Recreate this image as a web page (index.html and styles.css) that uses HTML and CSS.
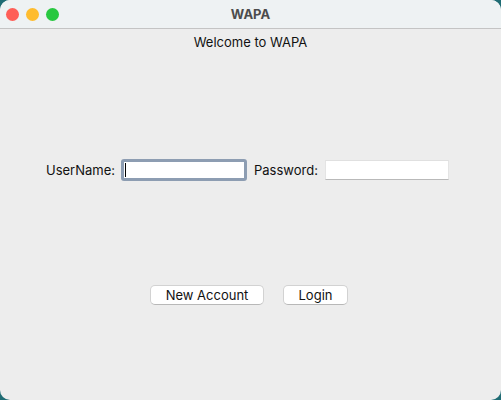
FILE: index.html
```html
<!DOCTYPE html>
<html>
<head>
<meta charset="utf-8">
<link rel="stylesheet" href="styles.css">
</head>
<body>
<div class="window">
  <div class="titlebar">
    <div class="lights">
      <span class="light red"></span>
      <span class="light yellow"></span>
      <span class="light green"></span>
    </div>
    <div class="title">WAPA</div>
  </div>
  <div class="content">
    <div class="welcome">Welcome to WAPA</div>
    <div class="form-row">
      <span class="label user">UserName:</span>
      <div class="field focused"><span class="caret"></span></div>
      <span class="label pw">Password:</span>
      <div class="field plain"></div>
    </div>
    <div class="button-row">
      <button class="btn new">New Account</button>
      <button class="btn login">Login</button>
    </div>
  </div>
</div>
</body>
</html>
```
FILE: styles.css
```css
html, body {
  margin: 0;
  padding: 0;
  background: #1f6c74;
}
body {
  width: 501px;
  height: 400px;
  overflow: hidden;
  font-family: Inter, "Liberation Sans", Arial, sans-serif;
  font-size: 13px;
  color: #111;
}
.window {
  width: 501px;
  height: 400px;
  background: #ededed;
  border-radius: 10px;
  overflow: hidden;
  display: flex;
  flex-direction: column;
}
.titlebar {
  height: 28px;
  background: #eef2f3;
  border-bottom: 1px solid #c4c4c4;
  display: flex;
  align-items: center;
  position: relative;
}
.lights {
  display: flex;
  gap: 7px;
  padding-left: 6px;
}
.light {
  width: 13px;
  height: 13px;
  border-radius: 50%;
  display: block;
}
.red { background: #fe5f57; }
.yellow { background: #febc2e; }
.green { background: #28c840; }
.title {
  position: absolute;
  left: 0;
  right: 0;
  top: 0;
  line-height: 28px;
  text-align: center;
  font-weight: bold;
  color: #4c4c4c;
  font-size: 13px;
}
.content {
  display: flex;
  flex-direction: column;
}
.welcome {
  margin-top: 5px;
  line-height: 16px;
  text-align: center;
}
.form-row {
  margin-top: 109px;
  height: 22px;
  display: flex;
  align-items: center;
  padding-left: 46px;
}
.label {
  line-height: 16px;
}
.user { width: 75px; }
.pw {
  margin-left: 7px;
  width: 71px;
}
.field {
  box-sizing: border-box;
  background: #fff;
  position: relative;
}
.focused {
  width: 126px;
  height: 22px;
  border: 3px solid #8d9db2;
  border-radius: 3px;
}
.caret {
  position: absolute;
  left: 1px;
  top: 1px;
  width: 1px;
  height: 14px;
  background: #000;
}
.plain {
  width: 124px;
  height: 20px;
  border-top: 1px solid #e0e0e0;
  border-left: 1px solid #e4e4e4;
  border-right: 1px solid #e4e4e4;
  border-bottom: 1px solid #b9b9b9;
}
.button-row {
  margin-top: 104px;
  display: flex;
  padding-left: 150px;
  gap: 19px;
}
.btn {
  font-family: Inter, "Liberation Sans", Arial, sans-serif;
  font-size: 13px;
  color: #111;
  background: #fff;
  height: 20px;
  border: 1px solid #d2d2d2;
  border-bottom-color: #b8b8b8;
  border-radius: 5px;
  padding: 0;
  line-height: 18px;
  box-sizing: border-box;
}
.new { width: 114px; }
.login { width: 65px; }
```
